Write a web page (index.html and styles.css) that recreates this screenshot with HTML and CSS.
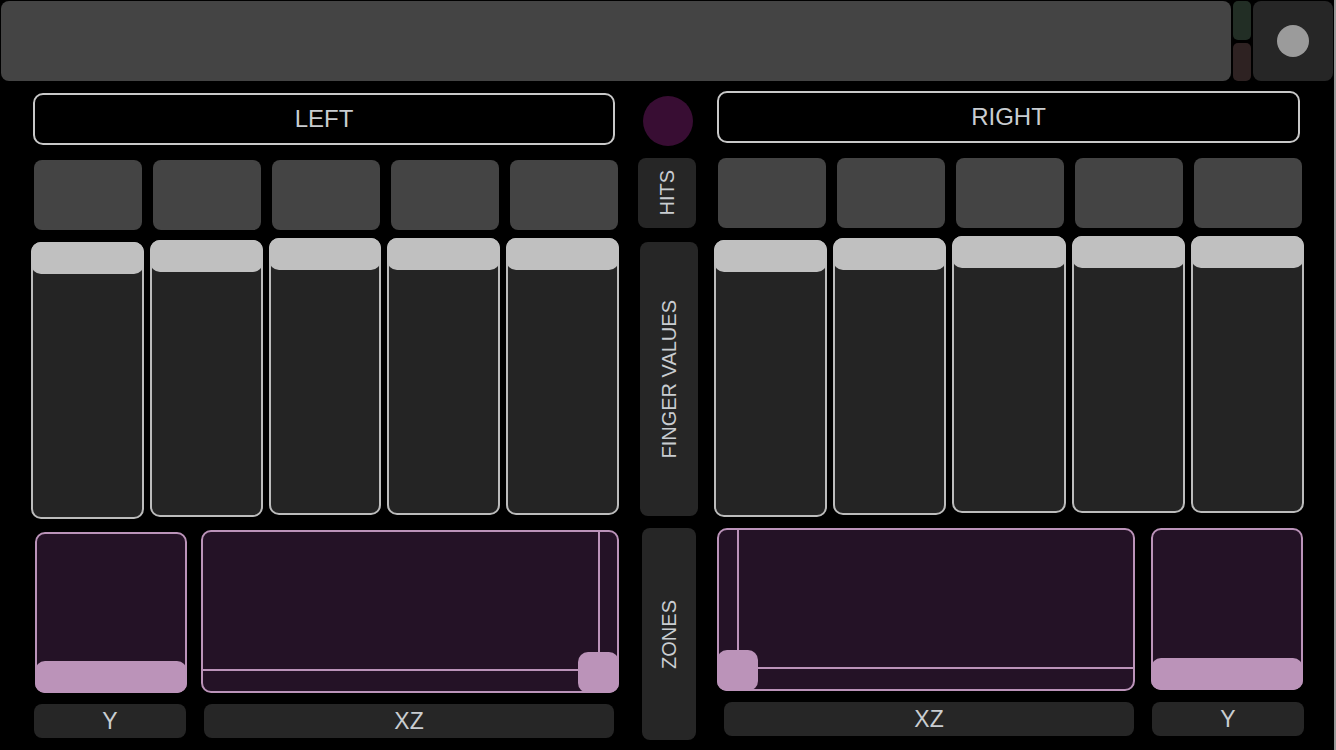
FILE: index.html
```html
<!DOCTYPE html>
<html lang="en">

<head>
    <meta charset="UTF-8">
    <meta name="viewport" content="width=device-width, initial-scale=1.0">

    <title>Hand Controller</title>
    <link rel="stylesheet" href="styles.css">
</head>

<body>
    <div class="app">
        <div class="topbar">
            <div class="display"></div>
            <div class="leds">
                <div class="led led-green"></div>
                <div class="led led-red"></div>
            </div>
            <div class="menu-btn"><span class="dot"></span></div>
        </div>

        <div class="main">
            <!-- left hand -->
            <div class="side side-left">
                <div class="header">LEFT</div>
                <div class="pads">
                    <div class="pad"></div>
                    <div class="pad"></div>
                    <div class="pad"></div>
                    <div class="pad"></div>
                    <div class="pad"></div>
                </div>
                <div class="faders">
                    <div class="fader"><div class="fader-knob"></div></div>
                    <div class="fader"><div class="fader-knob"></div></div>
                    <div class="fader"><div class="fader-knob"></div></div>
                    <div class="fader"><div class="fader-knob"></div></div>
                    <div class="fader"><div class="fader-knob"></div></div>
                </div>
                <div class="zones">
                    <div class="zone zone-y"><div class="y-knob"></div></div>
                    <div class="zone zone-xz">
                        <div class="line-v"></div>
                        <div class="line-h"></div>
                        <div class="xz-knob"></div>
                    </div>
                </div>
                <div class="labels">
                    <div class="label label-y">Y</div>
                    <div class="label label-xz">XZ</div>
                </div>
            </div>

            <!-- middle captions -->
            <div class="middle">
                <div class="status"></div>
                <div class="caption caption-hits"><span>HITS</span></div>
                <div class="caption caption-fingers"><span>FINGER VALUES</span></div>
                <div class="caption caption-zones"><span>ZONES</span></div>
            </div>

            <!-- right hand -->
            <div class="side side-right">
                <div class="header">RIGHT</div>
                <div class="pads">
                    <div class="pad"></div>
                    <div class="pad"></div>
                    <div class="pad"></div>
                    <div class="pad"></div>
                    <div class="pad"></div>
                </div>
                <div class="faders">
                    <div class="fader"><div class="fader-knob"></div></div>
                    <div class="fader"><div class="fader-knob"></div></div>
                    <div class="fader"><div class="fader-knob"></div></div>
                    <div class="fader"><div class="fader-knob"></div></div>
                    <div class="fader"><div class="fader-knob"></div></div>
                </div>
                <div class="zones">
                    <div class="zone zone-xz">
                        <div class="line-v"></div>
                        <div class="line-h"></div>
                        <div class="xz-knob"></div>
                    </div>
                    <div class="zone zone-y"><div class="y-knob"></div></div>
                </div>
                <div class="labels">
                    <div class="label label-xz">XZ</div>
                    <div class="label label-y">Y</div>
                </div>
            </div>
        </div>
    </div>
</body>

</html>
```

FILE: styles.css
```css
* {
    box-sizing: border-box;
}

body {
    margin: 0;
    background-color: #000;
    font-family: 'Liberation Sans', Arial, sans-serif;
    color: #c9cdd1;
}

.app {
    width: 1336px;
    height: 750px;
    padding-left: 1px;
    border-right: 2px solid #9a9a9a;
    overflow: hidden;
}

/* top bar */
.topbar {
    display: flex;
    gap: 2px;
    height: 80px;
    margin-top: 1px;
}

.display {
    width: 1230px;
    background-color: #444;
    border-radius: 8px;
}

.leds {
    display: flex;
    flex-direction: column;
    gap: 3px;
    width: 18px;
}

.led {
    flex: 1;
    border-radius: 5px;
}

.led-green {
    background-color: #222e25;
}

.led-red {
    background-color: #2e2222;
}

.menu-btn {
    width: 80px;
    display: flex;
    align-items: center;
    justify-content: center;
    background-color: #262626;
    border-radius: 8px;
}

.dot {
    width: 32px;
    height: 32px;
    border-radius: 50%;
    background-color: #9b9b9b;
}

/* main area */
.main {
    display: flex;
}

.side {
    display: flex;
    flex-direction: column;
}

.side-left {
    width: 588px;
    margin-left: 30px;
}

.side-right {
    width: 590px;
    margin-left: 16px;
}

.header {
    height: 52px;
    display: flex;
    align-items: center;
    justify-content: center;
    border: 2px solid #c8c8c8;
    border-radius: 10px;
    font-size: 24px;
}

.side-left .header {
    width: 582px;
    margin: 12px 0 0 2px;
}

.side-right .header {
    width: 583px;
    margin: 10px 0 0 3px;
}

.pads {
    display: grid;
    grid-template-columns: repeat(5, 108px);
    column-gap: 11px;
    height: 70px;
    margin-top: 15px;
}

.side-left .pads {
    margin-left: 3px;
}

.side-right .pads {
    margin-left: 4px;
}

.pad {
    background-color: #444;
    border-radius: 8px;
}

.faders {
    display: grid;
    grid-template-columns: repeat(5, 1fr);
    column-gap: 6px;
    height: 281px;
    margin-top: 8px;
}

.fader {
    position: relative;
    height: 277px;
    background-color: #242424;
    border: 2px solid #bcbcbc;
    border-radius: 10px;
}

.fader:nth-child(1) {
    margin-top: 4px;
}

.fader:nth-child(2) {
    margin-top: 2px;
}

.fader-knob {
    position: absolute;
    top: -2px;
    left: -2px;
    right: -2px;
    height: 32px;
    background-color: #c0c0c0;
    border-radius: 10px;
}

/* zones */
.zones {
    display: flex;
    height: 163px;
    margin-top: 11px;
}

.zone {
    position: relative;
    background-color: #241226;
    border: 2px solid #bb93b9;
    border-radius: 10px;
}

.side-left .zone-y {
    width: 152px;
    height: 161px;
    margin: 2px 0 0 4px;
}

.side-left .zone-xz {
    width: 418px;
    height: 163px;
    margin-left: 14px;
}

.side-right .zone-xz {
    width: 418px;
    height: 163px;
    margin-left: 3px;
}

.side-right .zone-y {
    width: 152px;
    height: 162px;
    margin-left: 16px;
}

.y-knob {
    position: absolute;
    left: -2px;
    right: -2px;
    bottom: -2px;
    height: 32px;
    background-color: #bb93b9;
    border-radius: 10px;
}

.line-v {
    position: absolute;
    top: 0;
    bottom: 0;
    width: 2px;
    background-color: #bb93b9;
}

.line-h {
    position: absolute;
    left: 0;
    right: 0;
    height: 2px;
    top: 137px;
    background-color: #bb93b9;
}

.xz-knob {
    position: absolute;
    bottom: -2px;
    width: 41px;
    height: 41px;
    background-color: #bb93b9;
    border-radius: 10px;
}

.side-left .line-v {
    left: 395px;
}

.side-left .xz-knob {
    right: -2px;
}

.side-right .line-v {
    left: 18px;
}

.side-right .xz-knob {
    left: -2px;
}

/* labels */
.labels {
    display: flex;
    gap: 18px;
    height: 34px;
    margin-top: 11px;
}

.label {
    display: flex;
    align-items: center;
    justify-content: center;
    background-color: #262626;
    border-radius: 8px;
    font-size: 23px;
}

.label-y {
    width: 152px;
}

.label-xz {
    width: 410px;
}

.side-left .labels {
    margin-left: 3px;
}

.side-right .labels {
    margin-left: 10px;
}

/* middle column */
.middle {
    display: flex;
    flex-direction: column;
    width: 60px;
    margin-left: 19px;
}

.status {
    width: 50px;
    height: 50px;
    margin: 15px 0 0 5px;
    border-radius: 50%;
    background-color: #380d33;
}

.caption {
    display: flex;
    align-items: center;
    justify-content: center;
    background-color: #262626;
    border-radius: 8px;
    font-size: 20px;
}

.caption span {
    writing-mode: vertical-rl;
    transform: rotate(180deg);
}

.caption-hits {
    width: 58px;
    height: 70px;
    margin-top: 12px;
}

.caption-fingers {
    width: 58px;
    height: 274px;
    margin: 14px 0 0 2px;
}

.caption-zones {
    width: 54px;
    height: 212px;
    margin: 12px 0 0 4px;
}
```
